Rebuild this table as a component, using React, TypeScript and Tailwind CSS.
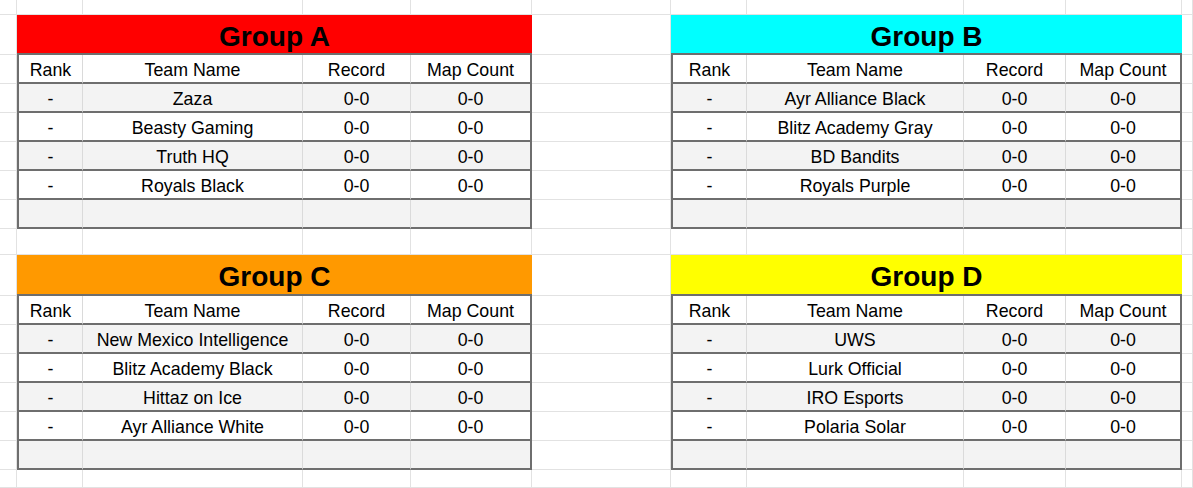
const groups = [
  {
    name: "Group A",
    color: "bg-[#ff0000]",
    place: "col-start-2 row-start-2",
    teams: ["Zaza", "Beasty Gaming", "Truth HQ", "Royals Black"],
  },
  {
    name: "Group B",
    color: "bg-[#00ffff]",
    place: "col-start-7 row-start-2",
    teams: ["Ayr Alliance Black", "Blitz Academy Gray", "BD Bandits", "Royals Purple"],
  },
  {
    name: "Group C",
    color: "bg-[#ff9900]",
    place: "col-start-2 row-start-10",
    teams: ["New Mexico Intelligence", "Blitz Academy Black", "Hittaz on Ice", "Ayr Alliance White"],
  },
  {
    name: "Group D",
    color: "bg-[#ffff00]",
    place: "col-start-7 row-start-10",
    teams: ["UWS", "Lurk Official", "IRO Esports", "Polaria Solar"],
  },
]

// 11 columns x 17 rows, minus the four 4x7 tables
const emptyCells = Array.from({ length: 75 })

function Cell({ text, col, shaded }: { text: string; col: number; shaded: boolean }) {
  const side =
    col === 0
      ? "border-l-2 border-l-[#6e6e6e] border-r border-r-[#dadada]"
      : col === 3
        ? "border-r-2 border-r-[#6e6e6e]"
        : "border-r border-r-[#dadada]"
  return (
    <div
      className={`flex items-center justify-center pt-[4px] border-b-2 border-b-[#6e6e6e] ${side} ${
        shaded ? "bg-[#f3f3f3]" : "bg-white"
      }`}
    >
      {text}
    </div>
  )
}

function GroupTable({ group }: { group: (typeof groups)[number] }) {
  const rows = [
    ["Rank", "Team Name", "Record", "Map Count"],
    ...group.teams.map((t) => ["-", t, "0-0", "0-0"]),
    ["", "", "", ""],
  ]
  return (
    <div className={`${group.place} col-span-4 row-span-7 grid grid-cols-subgrid grid-rows-subgrid`}>
      <div
        className={`col-span-4 flex items-center justify-center pt-[5px] border-b-2 border-b-[#6e6e6e] text-[28px] font-bold text-black ${group.color}`}
      >
        {group.name}
      </div>
      {rows.map((row, r) =>
        row.map((text, c) => <Cell key={`${r}-${c}`} text={text} col={c} shaded={r % 2 === 1} />)
      )}
    </div>
  )
}

export default function App() {
  return (
    <div className="grid h-[488px] w-[1193px] overflow-hidden bg-white font-['Liberation_Sans',Arial,sans-serif] text-[17.8px] text-black grid-cols-[17px_66px_220px_108px_121px_139px_76px_217px_102px_116px_1fr] grid-rows-[15px_40px_29px_29px_29px_29px_29px_29px_26px_41px_29px_29px_29px_29px_29px_29px_1fr]">
      {groups.map((g) => (
        <GroupTable key={g.name} group={g} />
      ))}
      {emptyCells.map((_, i) => (
        <div key={i} className="border-r border-b border-[#e2e2e2]" />
      ))}
    </div>
  )
}
